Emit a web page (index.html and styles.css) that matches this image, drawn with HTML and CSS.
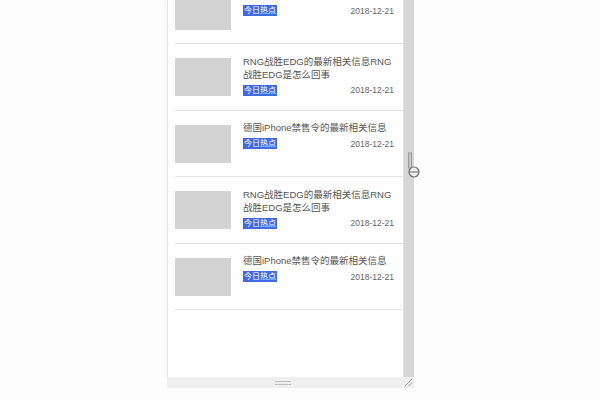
FILE: index.html
```html
<!DOCTYPE html>
<html>
<head>
<meta charset="utf-8">
<link rel="stylesheet" href="styles.css">
</head>
<body>
<div class="frame">
  <div class="main">
    <div class="view">
      <ul class="list">
        <li class="item">
          <div class="thumb"></div>
          <div class="info">
            <p class="title">德国iPhone禁售令的最新相关信息</p>
            <div class="meta"><span class="tag">今日热点</span><span class="date">2018-12-21</span></div>
          </div>
        </li>
        <li class="item">
          <div class="thumb"></div>
          <div class="info">
            <p class="title">RNG战胜EDG的最新相关信息RNG战胜EDG是怎么回事</p>
            <div class="meta"><span class="tag">今日热点</span><span class="date">2018-12-21</span></div>
          </div>
        </li>
        <li class="item">
          <div class="thumb"></div>
          <div class="info">
            <p class="title">德国iPhone禁售令的最新相关信息</p>
            <div class="meta"><span class="tag">今日热点</span><span class="date">2018-12-21</span></div>
          </div>
        </li>
        <li class="item">
          <div class="thumb"></div>
          <div class="info">
            <p class="title">RNG战胜EDG的最新相关信息RNG战胜EDG是怎么回事</p>
            <div class="meta"><span class="tag">今日热点</span><span class="date">2018-12-21</span></div>
          </div>
        </li>
        <li class="item">
          <div class="thumb"></div>
          <div class="info">
            <p class="title">德国iPhone禁售令的最新相关信息</p>
            <div class="meta"><span class="tag">今日热点</span><span class="date">2018-12-21</span></div>
          </div>
        </li>
      </ul>
    </div>
    <div class="scrollbar">
      <svg class="cursor" width="16" height="30" viewBox="0 0 16 30">
        <rect x="1.5" y="1" width="3" height="15" fill="#c8c8c8" stroke="#8c8c8c" stroke-width="0.8"/>
        <circle cx="7" cy="20" r="5" fill="#eeeeee" stroke="#6a6a6a" stroke-width="1.2"/>
        <line x1="2" y1="20" x2="12" y2="20" stroke="#6a6a6a" stroke-width="1"/>
      </svg>
    </div>
  </div>
  <div class="bottombar">
    <span class="handle"></span>
    <svg class="grip" width="9" height="9" viewBox="0 0 9 9">
      <line x1="1" y1="8" x2="8" y2="1" stroke="#999" stroke-width="1"/>
      <line x1="4.5" y1="8" x2="8" y2="4.5" stroke="#999" stroke-width="1"/>
    </svg>
  </div>
</div>
</body>
</html>
```
FILE: styles.css
```css
html, body {
  margin: 0;
  padding: 0;
  background: #fdfdfd;
}
body {
  font-family: "Liberation Sans", "Noto Sans CJK SC", sans-serif;
}
.frame {
  margin-left: 167px;
  width: 247px;
  height: 388px;
  display: flex;
  flex-direction: column;
}
.main {
  display: flex;
  height: 377px;
}
.view {
  flex: 1;
  overflow: hidden;
  background: #fefefe;
  border-left: 1px solid #e6e6e6;
  box-shadow: -2px 0 3px rgba(0,0,0,0.03);
}
.list {
  list-style: none;
  margin: -22.5px 0 0 0;
  padding: 0 0 0 7px;
}
.item {
  display: flex;
  align-items: flex-start;
  height: 65.5px;
  border-bottom: 1px solid #e4e4e4;
  box-sizing: content-box;
}
.thumb {
  width: 56px;
  height: 38px;
  margin-top: 14px;
  background: #d3d3d3;
  flex: none;
}
.info {
  flex: 1;
  padding: 10.5px 8px 0 12px;
}
.title {
  margin: 0;
  font-size: 9.5px;
  line-height: 13px;
  color: #555;
}
.meta {
  display: flex;
  justify-content: space-between;
  align-items: center;
  margin-top: 4px;
  height: 11px;
}
.tag {
  background: #4169e1;
  color: #fff;
  font-size: 8px;
  line-height: 11px;
  padding: 0 1px;
}
.date {
  font-size: 8.5px;
  color: #666;
  margin-right: 1px;
}
.scrollbar {
  position: relative;
  width: 10px;
  background: #d6d6d6;
  border-left: 1px solid #e2e2e2;
}
.cursor {
  position: absolute;
  left: 3px;
  top: 152px;
}
.bottombar {
  position: relative;
  height: 11px;
  background: #efefef;
  display: flex;
  justify-content: center;
  align-items: center;
}
.handle {
  width: 16px;
  height: 2px;
  border-top: 1px solid #bdbdbd;
  border-bottom: 1px solid #bdbdbd;
  margin-right: 16px;
}
.grip {
  position: absolute;
  right: 1px;
  top: 1px;
}
```
